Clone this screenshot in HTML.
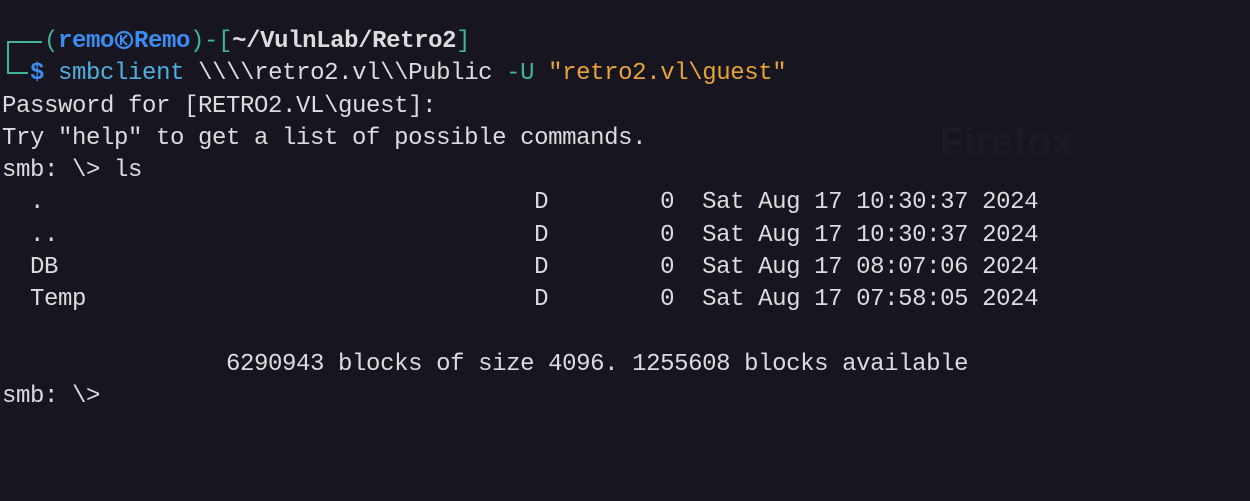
<!DOCTYPE html>
<html><head><meta charset="utf-8"><style>
html,body{margin:0;padding:0;background:#17151f;width:1250px;height:501px;overflow:hidden}
.t{position:absolute;left:2px;top:26px;font-family:"Liberation Mono","DejaVu Sans Mono",monospace;font-size:24px;letter-spacing:-0.4px;color:#dcdcdc}
.l{height:32.3px;line-height:32.3px;white-space:pre}
.g{color:#3fb396}.b{color:#3b8cf0;font-weight:bold}.w{color:#dcdcdc;font-weight:bold}
.c{color:#4fb0e0}.o{color:#e8a23a}
.ln{position:absolute;background:#3fb396}
.ff{position:absolute;left:940px;top:120px;font-family:"Liberation Sans",sans-serif;font-weight:bold;font-size:40px;color:#1d1a25}
</style></head><body>
<div class="ff">Firefox</div>
<div class="ln" style="left:7px;top:41px;width:2px;height:33px"></div>
<div class="ln" style="left:7px;top:41px;width:35px;height:2px"></div>
<div class="ln" style="left:7px;top:72px;width:21px;height:2px"></div>
<div class="t">
<div class="l"><span class="g">   (</span><span class="b">remo<svg width="20" height="20" viewBox="0 0 20 20" style="vertical-align:-3px"><circle cx="10" cy="10" r="8" fill="none" stroke="#3b8cf0" stroke-width="2.2"/><path d="M7 5v10M13 5l-5 5 5 5" fill="none" stroke="#3b8cf0" stroke-width="2"/></svg>Remo</span><span class="g">)-[</span><span class="w">~/VulnLab/Retro2</span><span class="g">]</span></div>
<div class="l">  <span class="b">$</span> <span class="c">smbclient</span> \\\\retro2.vl\\Public <span class="g">-U</span> <span class="o">"retro2.vl\guest"</span></div>
<div class="l">Password for [RETRO2.VL\guest]:</div>
<div class="l">Try "help" to get a list of possible commands.</div>
<div class="l">smb: \&gt; ls</div>
<div class="l">  .                                   D        0  Sat Aug 17 10:30:37 2024</div>
<div class="l">  ..                                  D        0  Sat Aug 17 10:30:37 2024</div>
<div class="l">  DB                                  D        0  Sat Aug 17 08:07:06 2024</div>
<div class="l">  Temp                                D        0  Sat Aug 17 07:58:05 2024</div>
<div class="l"> </div>
<div class="l">                6290943 blocks of size 4096. 1255608 blocks available</div>
<div class="l">smb: \&gt; </div>
</div>
</body></html>
